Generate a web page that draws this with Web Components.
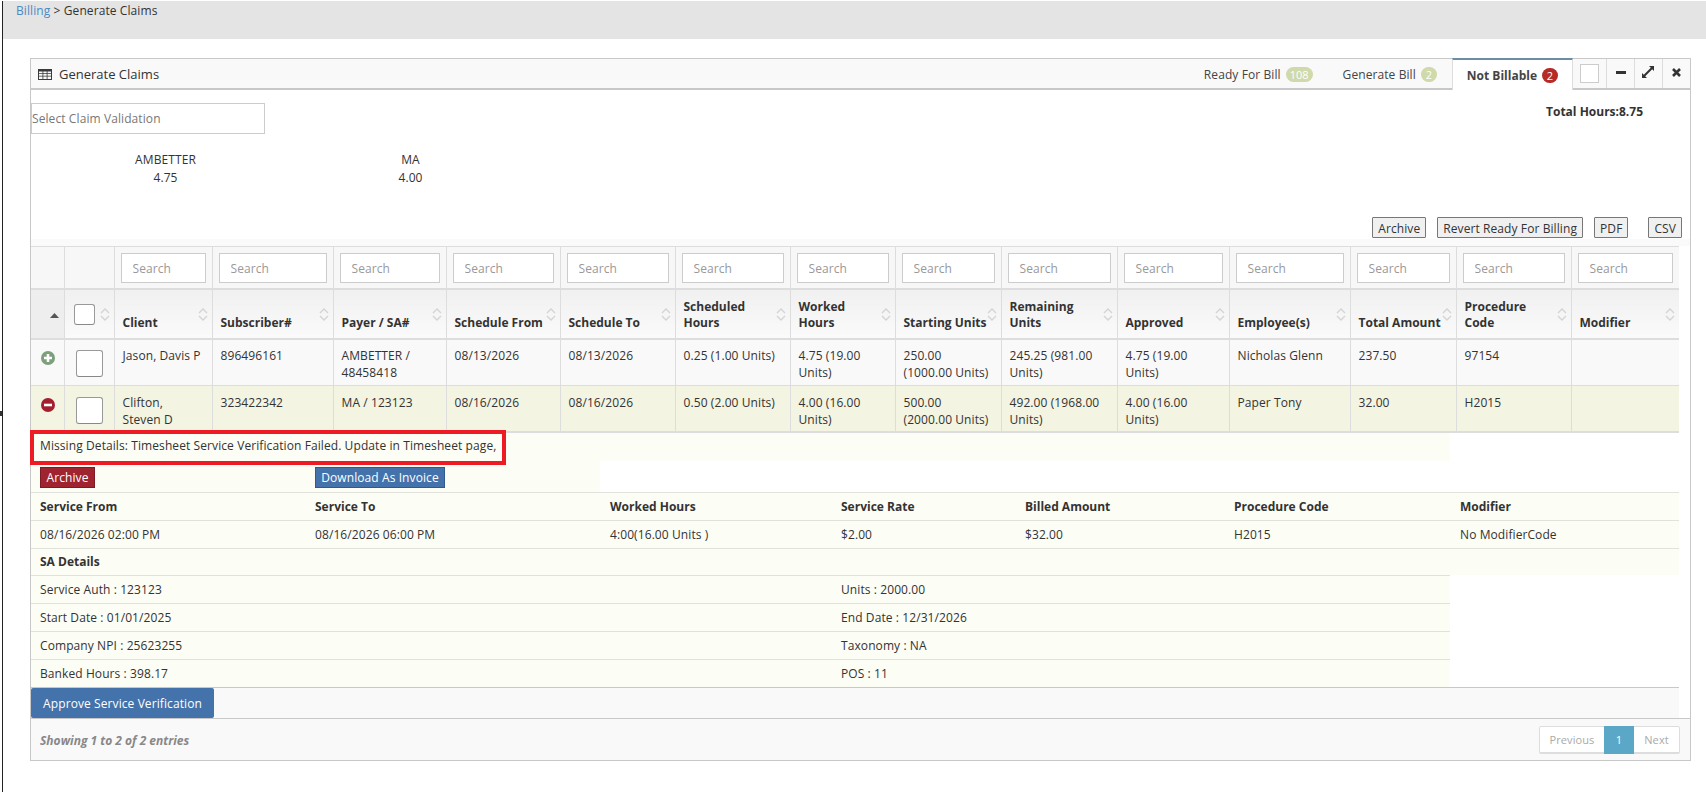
<!DOCTYPE html>
<html>
<head>
<meta charset="utf-8">
<title>Generate Claims</title>
<style>
  html, body { margin: 0; padding: 0; background: #fff; }
  body { font: 12px/17px "Open Sans", "Liberation Sans", sans-serif; letter-spacing: .09px; color: #333; overflow: hidden; }
</style>
</head>
<body>
<billing-page>
  <crumb-bar slot="crumb" current="Generate Claims">Billing</crumb-bar>
  <claims-portlet slot="main" title-text="Generate Claims">
    <claims-tab slot="tabs" count="108" tone="soft">Ready For Bill</claims-tab>
    <claims-tab slot="tabs" count="2" tone="soft">Generate Bill</claims-tab>
    <claims-tab slot="tabs" count="2" tone="alert" active>Not Billable</claims-tab>
    <claims-summary></claims-summary>
    <claims-grid></claims-grid>
    <claim-detail></claim-detail>
    <grid-footer></grid-footer>
  </claims-portlet>
</billing-page>

<script>
  class BillingPage extends HTMLElement {
    constructor() {
      super();
      this.attachShadow({ mode: 'open' });
      this.shadowRoot.innerHTML = `
        <style>
          :host { display: block; position: relative; height: 792px; margin-left: 2px; border-left: 1px solid #222; box-sizing: border-box; }
          .tick { position: absolute; left: -3px; top: 410px; width: 2px; height: 5px; background: #333; }
          .main { padding: 19px 15px 0 27px; }
        </style>
        <span class="tick"></span>
        <slot name="crumb"></slot>
        <div class="main"><slot name="main"></slot></div>
      `;
    }
  }

  class CrumbBar extends HTMLElement {
    constructor() {
      super();
      this.attachShadow({ mode: 'open' });
      this.shadowRoot.innerHTML = `
        <style>
          :host { display: block; height: 38px; margin-top: 1px; padding: 1px 13px 0; box-sizing: border-box; background: #e4e4e4; color: #333; }
          .link { color: #4b8bc4; }
        </style>
        <span class="link"><slot></slot></span> &gt; <span>${this.getAttribute('current')}</span>
      `;
    }
  }

  class ClaimsPortlet extends HTMLElement {
    constructor() {
      super();
      this.attachShadow({ mode: 'open' });
      this.shadowRoot.innerHTML = `
        <style>
          :host { display: block; border: 1px solid #c8c8c8; box-sizing: border-box; height: 703px; }
          .head { display: flex; height: 31px; box-sizing: border-box; background: #f9f9f9; border-bottom: 2px solid #c8c8c8; }
          .title { flex: 1; display: flex; align-items: center; gap: 7px; padding-left: 7px; font-size: 13px; letter-spacing: 0; padding-top: 1px; }
          .tabs { display: flex; }
          .ctl { display: flex; align-items: center; justify-content: center; border-left: 1px solid #ddd; height: 29px; }
          .pick { width: 33px; border-left: 0; box-sizing: border-box; padding-right: 7px; justify-content: flex-end; }
          .pick span { display: block; width: 19px; height: 19px; box-sizing: border-box; border: 1px solid #ccc; background: #fff; }
          .btn { width: 28px; box-sizing: border-box; }
        </style>
        <div class="head">
          <div class="title">
            <svg width="14" height="11" viewBox="0 0 14 11"><path fill="#3a3a3a" d="M0 0h14v11H0z"/><path fill="#f9f9f9" d="M1 2.500h3.500v1.700H1zM5.300 2.500h3.400v1.700H5.300zM9.500 2.500H13v1.700H9.500zM1 5h3.500v1.700H1zM5.300 5h3.400v1.700H5.300zM9.500 5H13v1.700H9.500zM1 7.500h3.500V10H1zM5.300 7.500h3.400V10H5.300zM9.500 7.500H13V10H9.500z"/></svg>
            <span>${this.getAttribute('title-text')}</span>
          </div>
          <div class="tabs"><slot name="tabs"></slot></div>
          <div class="ctl pick"><span></span></div>
          <div class="ctl btn">
            <svg width="10" height="3" viewBox="0 0 10 3" style="margin-top:-3px"><path fill="#333" d="M0 0h10v3H0z"/></svg>
          </div>
          <div class="ctl btn">
            <svg width="12" height="12" viewBox="0 0 12 12" style="margin:-3px 2px 0 0"><path fill="#333" d="M7 0h5v5l-1.800-1.800-7 7L5 12H0V7l1.800 1.800 7-7z"/></svg>
          </div>
          <div class="ctl btn">
            <svg width="9" height="9" viewBox="0 0 9 9" style="margin-top:-3px"><path fill="none" stroke="#333" stroke-width="2.600" d="M1 1l7 7M8 1L1 8"/></svg>
          </div>
        </div>
        <slot></slot>
      `;
    }
  }

  class ClaimsTab extends HTMLElement {
    constructor() {
      super();
      this.attachShadow({ mode: 'open' });
      this.shadowRoot.innerHTML = `
        <style>
          :host { display: flex; align-items: center; gap: 5px; padding: 2px 15px 0; height: 29px; box-sizing: border-box; color: #444; }
          :host([active]) { height: 32px; margin-top: -1px; padding: 1px 14px 0; background: #fff; font-weight: 700; letter-spacing: 0; color: #444; border: solid #ddd; border-width: 0 1px; border-top: 2px solid #6b8ea6; }
          .badge { display: inline-block; min-width: 16px; height: 15px; box-sizing: border-box; padding: 0 4px; border-radius: 8px; font-size: 11px; line-height: 15px; text-align: center; font-weight: 400; letter-spacing: 0; color: #fff; }
          .soft { background: #cfd9a9; }
          .alert { background: #b52b27; }
        </style>
        <span><slot></slot></span>
        <span class="badge ${this.getAttribute('tone')}">${this.getAttribute('count')}</span>
      `;
    }
  }

  class ClaimsSummary extends HTMLElement {
    constructor() {
      super();
      this.attachShadow({ mode: 'open' });
      this.shadowRoot.innerHTML = `
        <style>
          :host { display: block; height: 156px; box-sizing: border-box; padding-top: 13px; background: linear-gradient(#fff 149px, #fafafa 149px); }
          .top { display: flex; justify-content: space-between; height: 31px; }
          .pick { width: 234px; height: 31px; box-sizing: border-box; border: 1px solid #ccc; color: #777; line-height: 30px; white-space: nowrap; }
          .total { font-weight: 700; letter-spacing: 0; padding: 0 47px 0 0; }
          .payers { display: grid; grid-template-columns: 245px 245px; margin: 17px 0 0 12px; text-align: center; line-height: 18px; height: 36px; }
          .actions { display: flex; justify-content: flex-end; margin-top: 30px; padding-right: 8px; }
          .actions button { font: inherit; letter-spacing: inherit; color: #333; height: 21px; padding: 2px 5px 0; background: #f0f0f0; border: 1px solid #777; border-radius: 1px; margin-left: 11px; line-height: 17px; }
          .actions button.far { margin-left: 20px; }
        </style>
        <div class="top">
          <div class="pick">Select Claim Validation</div>
          <div class="total">Total Hours:8.75</div>
        </div>
        <div class="payers">
          <div>AMBETTER<br>4.75</div>
          <div>MA<br>4.00</div>
        </div>
        <div class="actions">
          <button>Archive</button>
          <button>Revert Ready For Billing</button>
          <button>PDF</button>
          <button class="far">CSV</button>
        </div>
      `;
    }
  }

  const SORT_ICON = `<svg class="sort" width="10" height="13" viewBox="0 0 10 13"><path fill="none" stroke="#d4d4d4" stroke-width="1.400" d="M1 5l4-4 4 4M1 8l4 4 4-4"/></svg>`;

  const COLUMNS = [
    ['Client', 98], ['Subscriber#', 121], ['Payer / SA#', 113], ['Schedule From', 114], ['Schedule To', 115],
    ['Scheduled<br>Hours', 115], ['Worked<br>Hours', 105], ['Starting Units', 106], ['Remaining<br>Units', 116],
    ['Approved', 112], ['Employee(s)', 121], ['Total Amount', 106], ['Procedure<br>Code', 115], ['Modifier', 108]
  ];

  const ROWS = [
    { open: false, cells: ['Jason, Davis P', '896496161', 'AMBETTER /<br>48458418', '08/13/2026', '08/13/2026', '0.25 (1.00 Units)', '4.75 (19.00<br>Units)', '250.00<br>(1000.00 Units)', '245.25 (981.00<br>Units)', '4.75 (19.00<br>Units)', 'Nicholas Glenn', '237.50', '97154', ''] },
    { open: true, cells: ['Clifton,<br>Steven D', '323422342', 'MA / 123123', '08/16/2026', '08/16/2026', '0.50 (2.00 Units)', '4.00 (16.00<br>Units)', '500.00<br>(2000.00 Units)', '492.00 (1968.00<br>Units)', '4.00 (16.00<br>Units)', 'Paper Tony', '32.00', 'H2015', ''] }
  ];

  class ClaimsGrid extends HTMLElement {
    constructor() {
      super();
      this.attachShadow({ mode: 'open' });
      const cols = COLUMNS.map(c => `<col style="width:${c[1]}px">`).join('');
      const searches = COLUMNS.map(() => `<td class="find"><input placeholder="Search"></td>`).join('');
      const heads = COLUMNS.map(c => `<th><div class="lab"><span>${c[0]}</span>${SORT_ICON}</div></th>`).join('');
      const rows = ROWS.map(r => `
        <tr class="${r.open ? 'open' : ''}">
          <td class="tog">${r.open ? this.minusIcon() : this.plusIcon()}</td>
          <td class="chk"><span class="box big"></span></td>
          ${r.cells.map(c => `<td>${c}</td>`).join('')}
        </tr>`).join('');
      this.shadowRoot.innerHTML = `
        <style>
          :host { display: block; width: 1648px; }
          table { border-collapse: collapse; table-layout: fixed; width: 1648px; }
          td, th { border: 1px solid #ddd; box-sizing: border-box; vertical-align: top; text-align: left; padding: 7px 8px 3px 8px; }
          tr > :first-child { border-left: 0; }
          tr > :last-child { border-right: 0; }
          .search td { height: 41px; background: #f7f7f7; border-bottom: 2px solid #ddd; padding: 6px 6px 5px; }
          .find input { display: block; width: 100%; height: 30px; box-sizing: border-box; border: 1px solid #ccc; padding: 0 11px; font: inherit; letter-spacing: inherit; background: #fff; outline: 0; }
          .find input::placeholder { color: #999; opacity: 1; }
          .head th { height: 48px; padding: 7px 4px 7px 8px; font-weight: 700; letter-spacing: 0; line-height: 16px; color: #333; border-bottom: 2px solid #ddd; background: linear-gradient(#f0f0f0, #fafafa); vertical-align: top; }
          .lab { display: flex; justify-content: space-between; align-items: flex-end; height: 34px; }
          .sort { align-self: center; flex: none; }
          .head th.sorted { background: #eee; vertical-align: middle; text-align: right; padding: 0 5px 0 0; }
          .head th.all { padding: 0 4px 0 9px; vertical-align: middle; }
          .all .wrap { display: flex; align-items: center; justify-content: space-between; height: 24px; }
          .box { display: block; box-sizing: border-box; background: #fff; border: 1px solid #999; border-bottom-color: #888; border-radius: 3px; width: 21px; height: 21px; }
          .box.big { width: 27px; height: 27px; }
          tbody tr { background: #f9f9f9; height: 46px; }
          tbody tr.open { background: #f3f4e1; border-bottom: 2px solid #ddd; height: 47px; }
          tbody tr.open td { padding-top: 8px; }
          tbody td { line-height: 17px; }
          td.tog, tbody tr.open td.tog { padding: 11px 0 0 10px; }
          tbody tr.open td.tog { padding-top: 12px; }
          td.chk { padding: 10px 0 0 11px; }
          tbody tr.open td.chk { padding: 11px 0 0 11px; }
          td.tog svg { display: block; }
        </style>
        <table>
          <colgroup><col style="width:33px"><col style="width:50px">${cols}</colgroup>
          <thead>
            <tr class="search"><td></td><td></td>${searches}</tr>
            <tr class="head">
              <th class="sorted"><svg width="9" height="5" viewBox="0 0 9 5"><path fill="#555" d="M4.500 0L9 5H0z"/></svg></th>
              <th class="all"><div class="wrap"><span class="box"></span>${SORT_ICON}</div></th>
              ${heads}
            </tr>
          </thead>
          <tbody>${rows}</tbody>
        </table>
      `;
    }

    plusIcon() {
      return `<svg width="14" height="14" viewBox="0 0 14 14"><circle cx="7" cy="7" r="7" fill="#7d9f7c"/><path fill="#fff" d="M5.700 3h2.600v2.700H11v2.600H8.300V11H5.700V8.300H3V5.700h2.700z"/></svg>`;
    }

    minusIcon() {
      return `<svg width="14" height="14" viewBox="0 0 14 14"><circle cx="7" cy="7" r="7" fill="#a31f2e"/><path fill="#fff" d="M3 5.700h8v2.600H3z"/></svg>`;
    }
  }

  class ClaimDetail extends HTMLElement {
    constructor() {
      super();
      this.attachShadow({ mode: 'open' });
      this.shadowRoot.innerHTML = `
        <style>
          :host { display: block; position: relative; width: 1648px; }
          .mark { position: absolute; left: -1px; top: -3px; width: 476px; height: 35px; box-sizing: border-box; border: 4px solid #ed1c24; pointer-events: none; }
          .note { width: 1419px; height: 28px; line-height: 26px; padding-left: 9px; box-sizing: border-box; background: #fcfdf5; }
          .acts { display: grid; grid-template-columns: 275px 285px; width: 569px; height: 31px; box-sizing: border-box; padding: 6px 0 0 9px; background: #fcfdf5; }
          .acts button { font: inherit; letter-spacing: inherit; color: #fff; height: 21px; padding: 0; border-radius: 0; line-height: 17px; }
          .red { width: 55px; background: #a02330; border: 1px solid #7c1a25; }
          .blue { width: 130px; background: #4472ab; border: 1px solid #33588a; }
          .row { display: grid; height: 28px; line-height: 27px; box-sizing: border-box; border-top: 1px solid #e2e2dc; background: #fcfdf5; }
          .svc { grid-template-columns: 275px 295px 231px 184px 209px 226px 228px; }
          .sa { grid-template-columns: 801px 618px; width: 1419px; }
          .row > div { padding-left: 9px; }
          .hd { font-weight: 700; letter-spacing: 0; }
          .title { height: 27px; line-height: 26px; }
          .approve { height: 31px; border-top: 1px solid #c8c8c8; background: #f9f9f9; box-sizing: border-box; }
          .approve button { display: block; font: inherit; letter-spacing: inherit; color: #fff; width: 183px; height: 30px; background: #4472ab; border: 0; border-radius: 2px; padding: 0; }
        </style>
        <div class="mark"></div>
        <div class="note">Missing Details: Timesheet Service Verification Failed. Update in Timesheet page,</div>
        <div class="acts"><div><button class="red">Archive</button></div><div><button class="blue">Download As Invoice</button></div></div>
        <div class="row svc hd"><div>Service From</div><div>Service To</div><div>Worked Hours</div><div>Service Rate</div><div>Billed Amount</div><div>Procedure Code</div><div>Modifier</div></div>
        <div class="row svc"><div>08/16/2026 02:00 PM</div><div>08/16/2026 06:00 PM</div><div>4:00(16.00 Units )</div><div>$2.00</div><div>$32.00</div><div>H2015</div><div>No ModifierCode</div></div>
        <div class="row hd title"><div>SA Details</div></div>
        <div class="row sa"><div>Service Auth : 123123</div><div>Units : 2000.00</div></div>
        <div class="row sa"><div>Start Date : 01/01/2025</div><div>End Date : 12/31/2026</div></div>
        <div class="row sa"><div>Company NPI : 25623255</div><div>Taxonomy : NA</div></div>
        <div class="row sa"><div>Banked Hours : 398.17</div><div>POS : 11</div></div>
        <div class="approve"><button>Approve Service Verification</button></div>
      `;
    }
  }

  class GridFooter extends HTMLElement {
    constructor() {
      super();
      this.attachShadow({ mode: 'open' });
      this.shadowRoot.innerHTML = `
        <style>
          :host { display: flex; align-items: flex-start; justify-content: space-between; height: 42px; box-sizing: border-box; border-top: 1px solid #c8c8c8; background: #f9f9f9; padding: 7px 10px 0 9px; }
          .info { font-weight: 700; font-style: italic; letter-spacing: 0; color: #888; padding-top: 6px; }
          .pages { display: flex; height: 28px; box-sizing: border-box; border: 1px solid #ddd; border-bottom-width: 2px; border-radius: 2px; background: #fff; font-size: 11px; color: #aaa; line-height: 26px; }
          .pages span { text-align: center; }
          .prev { width: 64px; }
          .cur { width: 30px; background: #5ba7c8; color: #fff; margin: -1px 0 -2px; padding-top: 1px; }
          .next { width: 45px; }
        </style>
        <div class="info">Showing 1 to 2 of 2 entries</div>
        <div class="pages"><span class="prev">Previous</span><span class="cur">1</span><span class="next">Next</span></div>
      `;
    }
  }

  customElements.define('billing-page', BillingPage);
  customElements.define('crumb-bar', CrumbBar);
  customElements.define('claims-portlet', ClaimsPortlet);
  customElements.define('claims-tab', ClaimsTab);
  customElements.define('claims-summary', ClaimsSummary);
  customElements.define('claims-grid', ClaimsGrid);
  customElements.define('claim-detail', ClaimDetail);
  customElements.define('grid-footer', GridFooter);
</script>
</body>
</html>
